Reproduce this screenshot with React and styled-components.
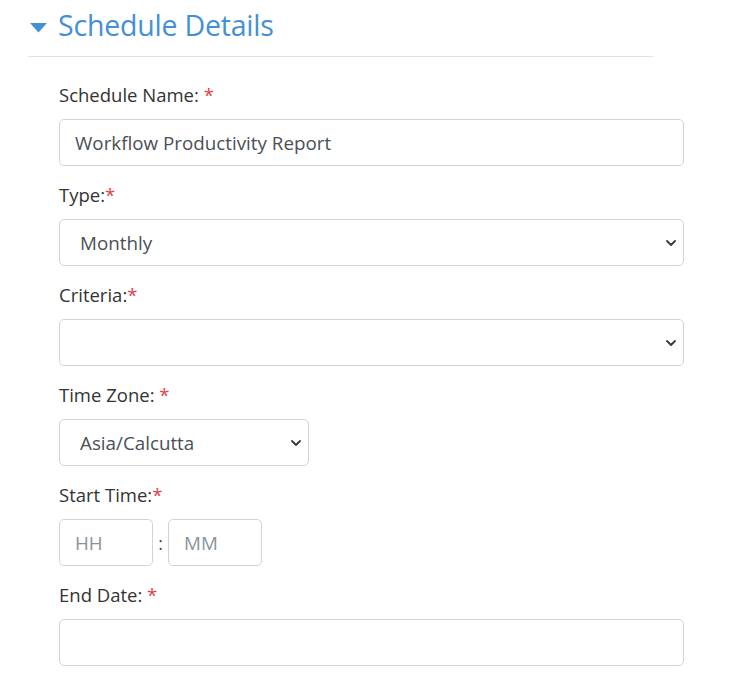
import styled, {createGlobalStyle} from 'styled-components'

const GlobalStyle = createGlobalStyle`
  body {
    margin: 0;
    background: #fff;
    font-family: "Open Sans", "Noto Sans", sans-serif;
  }
`

const Page = styled.div`
  padding: 0 0 0 28px;
  width: 656px;
`
const Header = styled.div`
  display: flex;
  align-items: center;
  gap: 11px;
  height: 57px;
  padding-left: 2px;
  border-bottom: 1px solid #e3e3e3;
  width: 625px;
  box-sizing: border-box;
`
const Title = styled.h2`
  margin: 0;
  margin-top: -6px;
  font-size: 28.5px;
  font-weight: 400;
  color: #4490d8;
  letter-spacing: -0.2px;
`
const Form = styled.div`
  padding: 26px 0 0 31px;
  display: flex;
  flex-direction: column;
`
const Field = styled.div`
  display: flex;
  flex-direction: column;
  margin-bottom: 17px;
`
const Label = styled.label`
  font-size: 18.5px;
  line-height: 24px;
  color: #333;
  margin-bottom: 12px;
  & span {
    color: #e0404a;
  }
`
const Input = styled.input`
  box-sizing: border-box;
  width: ${p => p.$width || '625px'};
  height: 47px;
  border: 1px solid #ced4da;
  border-radius: 5px;
  padding: 0 15px;
  font-family: inherit;
  font-size: 18.8px;
  color: #495057;
  outline: none;
  &::placeholder {
    color: #8a939b;
  }
`
const SelectWrap = styled.div`
  position: relative;
  width: ${p => p.$width || '625px'};
`
const Select = styled.select`
  appearance: none;
  box-sizing: border-box;
  width: 100%;
  height: 47px;
  border: 1px solid #ced4da;
  border-radius: 5px;
  padding: 0 20px;
  font-family: inherit;
  font-size: 18.8px;
  color: #495057;
  background: #fff;
  outline: none;
`
const Chevron = styled.svg`
  position: absolute;
  right: 8px;
  top: 20px;
  pointer-events: none;
`
const TimeRow = styled.div`
  display: flex;
  align-items: center;
`
const Colon = styled.span`
  width: 15px;
  text-align: center;
  font-size: 18px;
  color: #495057;
`

const Arrow = () => (
  <Chevron width="10" height="8" viewBox="0 0 10 8">
    <path d="M1 2 L5 6 L9 2" fill="none" stroke="#343a40" strokeWidth="1.8" strokeLinecap="round" strokeLinejoin="round" />
  </Chevron>
)

const App = () => {
  return (
    <Page>
      <GlobalStyle />
      <Header>
        <svg width="17" height="10" viewBox="0 0 17 10">
          <path d="M0 0 L17 0 L8.5 9.5 Z" fill="#4490d8" />
        </svg>
        <Title>Schedule Details</Title>
      </Header>
      <Form>
        <Field>
          <Label>Schedule Name: <span>*</span></Label>
          <Input defaultValue="Workflow Productivity Report" />
        </Field>
        <Field>
          <Label>Type:<span>*</span></Label>
          <SelectWrap>
            <Select defaultValue="Monthly">
              <option>Daily</option>
              <option>Weekly</option>
              <option>Monthly</option>
            </Select>
            <Arrow />
          </SelectWrap>
        </Field>
        <Field>
          <Label>Criteria:<span>*</span></Label>
          <SelectWrap>
            <Select defaultValue="">
              <option value=""></option>
            </Select>
            <Arrow />
          </SelectWrap>
        </Field>
        <Field>
          <Label>Time Zone: <span>*</span></Label>
          <SelectWrap $width="250px">
            <Select defaultValue="Asia/Calcutta">
              <option>Asia/Calcutta</option>
            </Select>
            <Arrow />
          </SelectWrap>
        </Field>
        <Field>
          <Label>Start Time:<span>*</span></Label>
          <TimeRow>
            <Input $width="94px" placeholder="HH" />
            <Colon>:</Colon>
            <Input $width="94px" placeholder="MM" />
          </TimeRow>
        </Field>
        <Field>
          <Label>End Date: <span>*</span></Label>
          <Input />
        </Field>
      </Form>
    </Page>
  )
}

export default App
